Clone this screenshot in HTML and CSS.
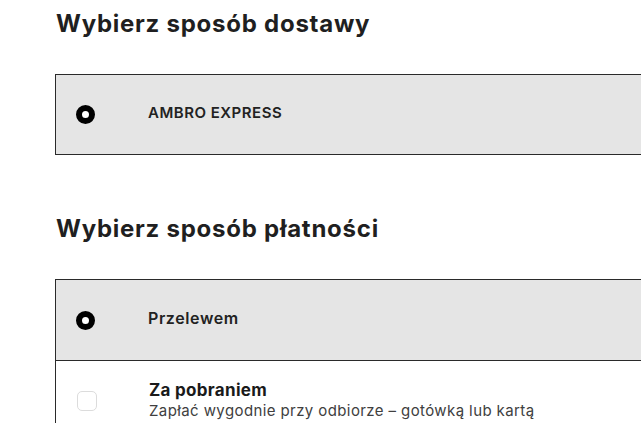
FILE: index.html
```html
<!DOCTYPE html>
<html lang="pl">
<head>
<meta charset="utf-8">
<title>Dostawa i płatność</title>
<link rel="stylesheet" href="styles.css">
</head>
<body>
<div class="page">
  <section class="section">
    <h2 class="heading">Wybierz sposób dostawy</h2>
    <div class="box">
      <div class="row row--selected">
        <span class="radio"></span>
        <span class="label label--upper">AMBRO EXPRESS</span>
      </div>
    </div>
  </section>
  <section class="section section--second">
    <h2 class="heading">Wybierz sposób płatności</h2>
    <div class="box">
      <div class="row row--selected row--tall">
        <span class="radio"></span>
        <span class="label label--method">Przelewem</span>
      </div>
      <div class="row row--plain">
        <span class="check"></span>
        <div class="text">
          <span class="label label--big">Za pobraniem</span>
          <span class="desc">Zapłać wygodnie przy odbiorze – gotówką lub kartą</span>
        </div>
      </div>
    </div>
  </section>
</div>
</body>
</html>
```
FILE: styles.css
```css
html, body {
  margin: 0;
  padding: 0;
  background: #ffffff;
  overflow: hidden;
}
body {
  font-family: "Inter", "Noto Sans", sans-serif;
  color: #1d1d1f;
}
.page {
  padding: 0 0 0 55px;
  width: 700px;
}
.heading {
  margin: 0;
  font-size: 24px;
  font-weight: 700;
  line-height: 32px;
  letter-spacing: 0.75px;
  padding-left: 1px;
  color: #1f1f21;
}
.section {
  padding-top: 8px;
}
.section--second {
  padding-top: 58px;
}
.box {
  margin-top: 34px;
  border: 1px solid #2a2a2a;
  border-right: none;
}
.row {
  display: flex;
  align-items: center;
  padding-left: 20px;
}
.row--selected {
  height: 79px;
  background: #e5e5e5;
}
.row--tall {
  height: 80px;
}
.row--selected + .row {
  border-top: 1px solid #2a2a2a;
}
.row--plain {
  align-items: flex-start;
  padding-top: 19px;
  height: 80px;
  background: #ffffff;
}
.radio {
  width: 7px;
  height: 7px;
  border: 6px solid #000;
  border-radius: 50%;
  background: #fff;
  flex: none;
}
.check {
  width: 18px;
  height: 18px;
  border: 1px solid #dcdcdc;
  border-radius: 5px;
  flex: none;
  margin-top: 11px;
  margin-left: 1px;
}
.label {
  margin-left: 53px;
  font-size: 15px;
  font-weight: 600;
  color: #222;
  margin-bottom: 4px;
}
.label--upper {
  letter-spacing: 0.5px;
}
.label--method {
  font-size: 16px;
  letter-spacing: 0.6px;
}
.check + .text {
  margin-left: 52px;
}
.text {
  display: flex;
  flex-direction: column;
}
.text .label {
  margin-left: 0;
  margin-bottom: 0;
}
.label--big {
  font-size: 17px;
  font-weight: 700;
  line-height: 20px;
  letter-spacing: 0.3px;
  color: #1a1a1a;
}
.desc {
  font-size: 15px;
  line-height: 22px;
  color: #404040;
  letter-spacing: 0.4px;
}
```
